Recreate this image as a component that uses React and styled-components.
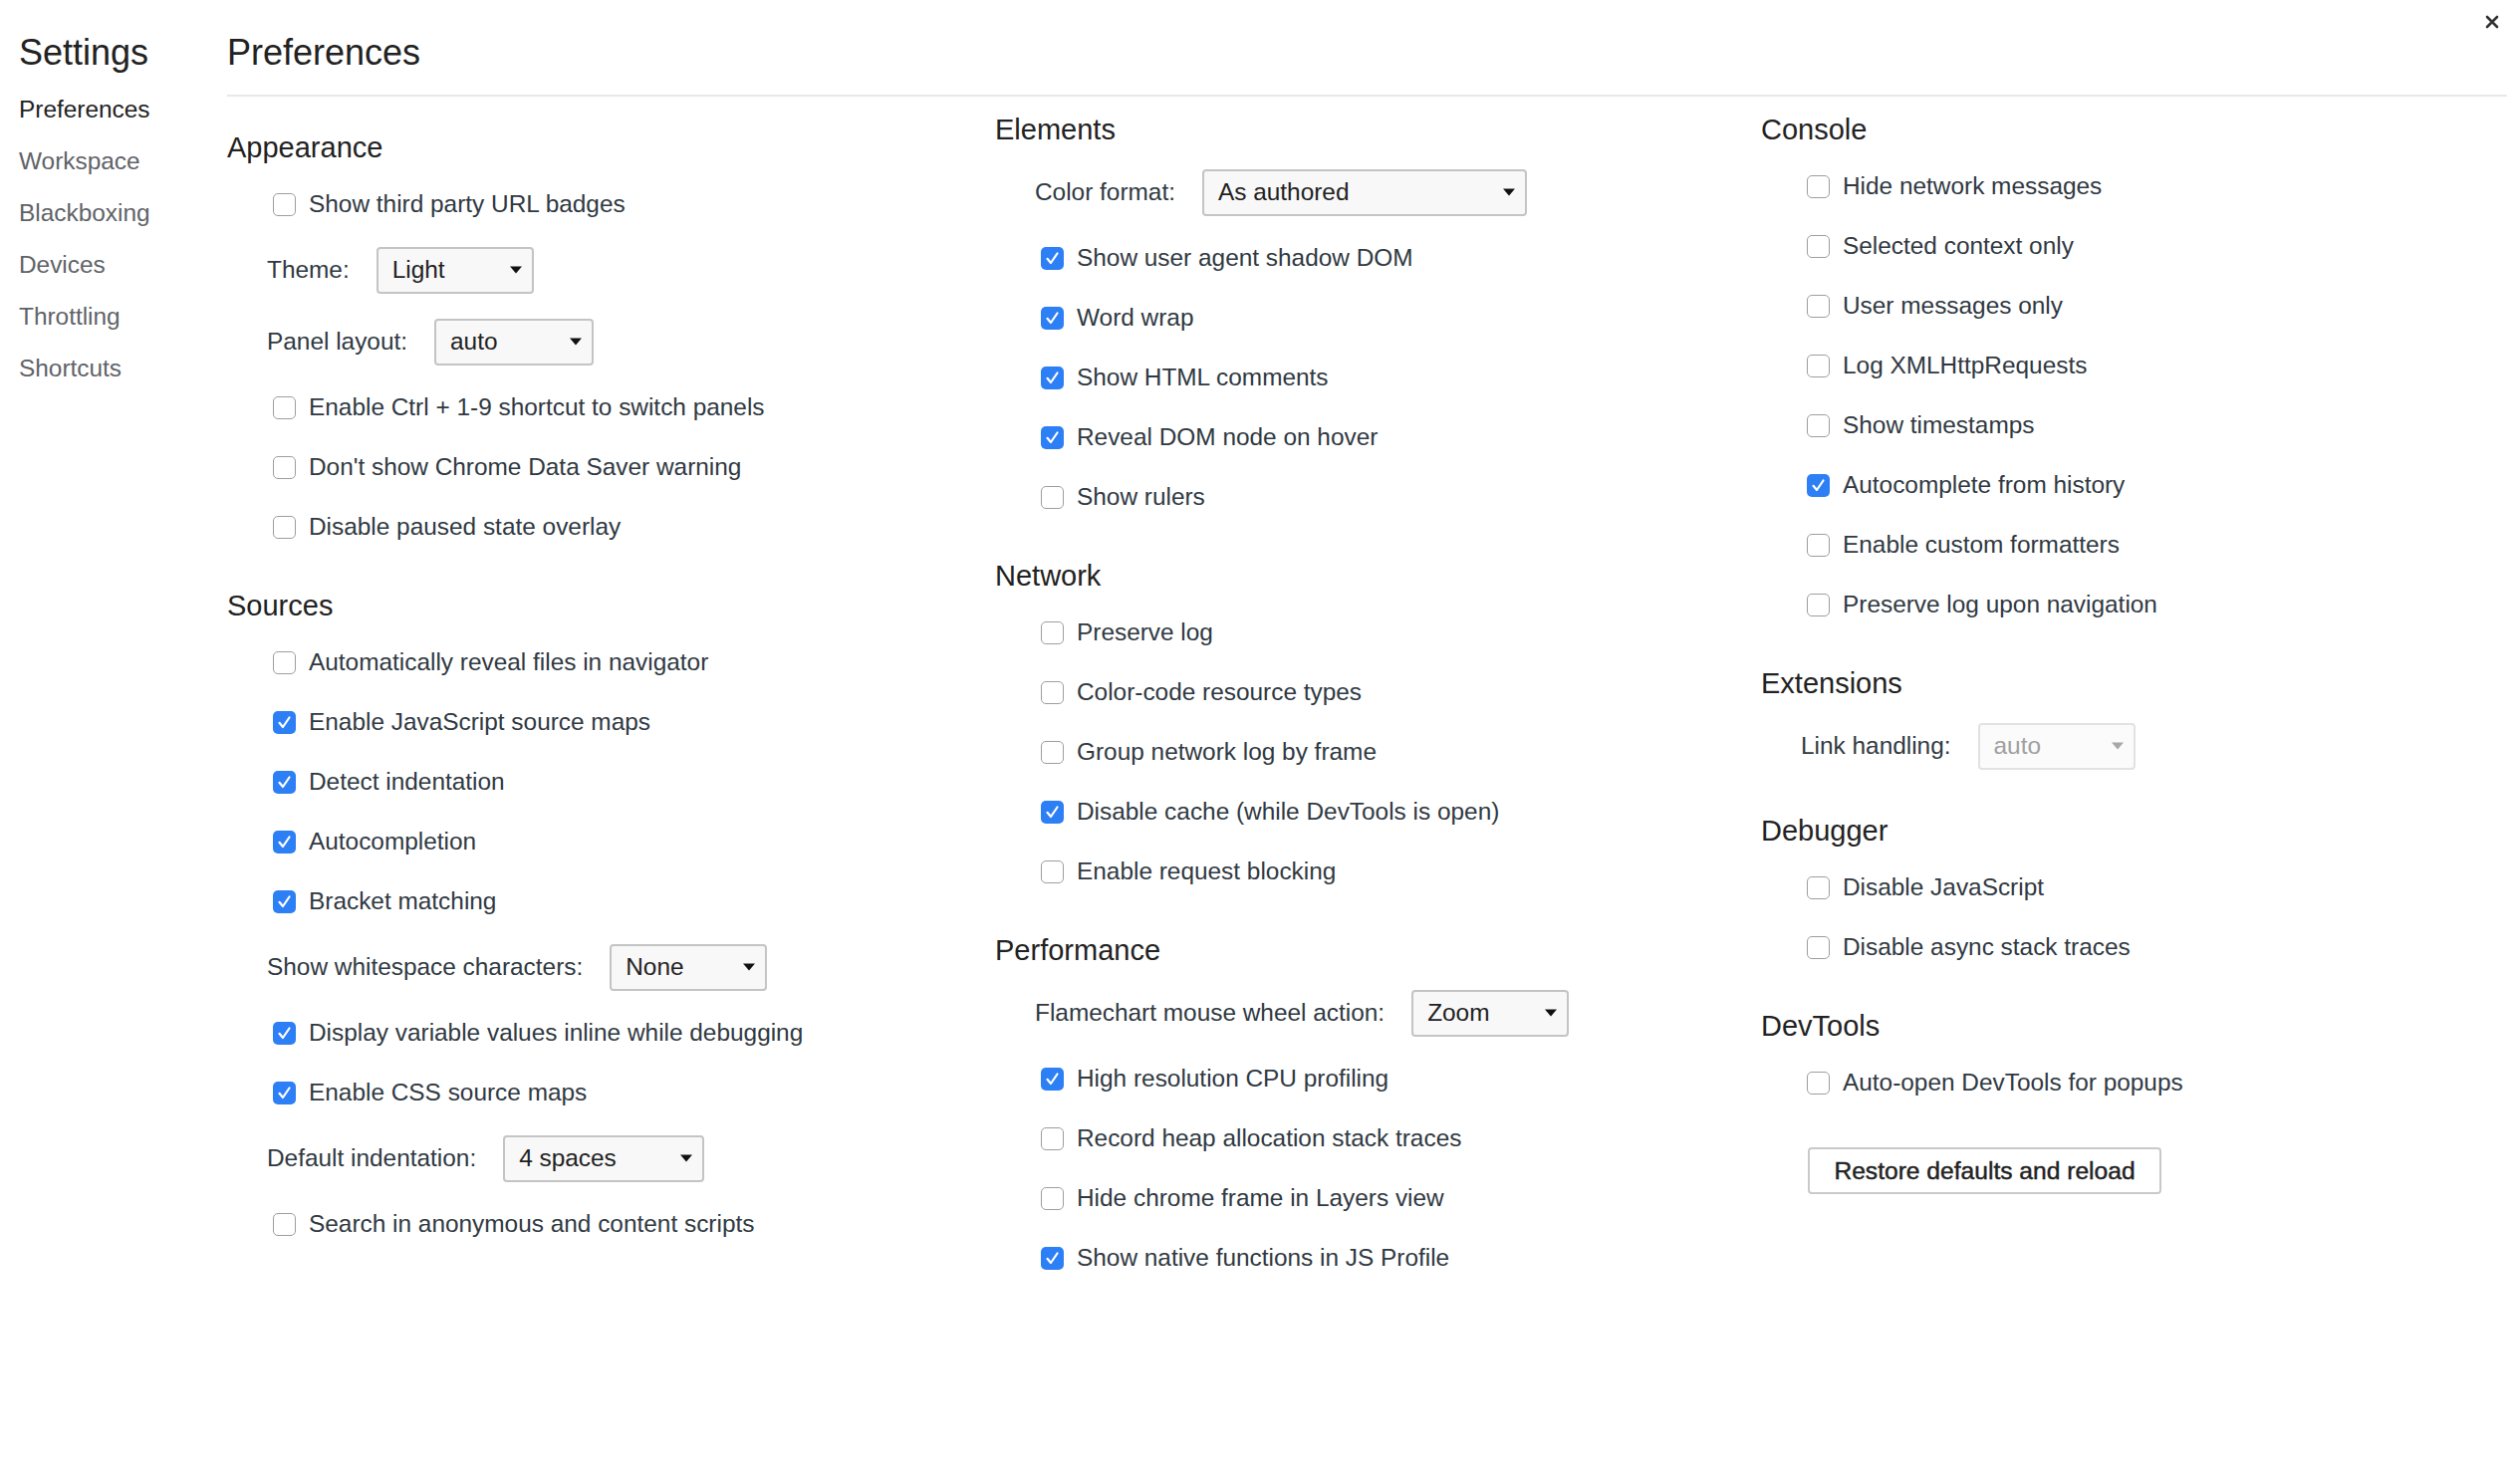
import React from "react";
import styled, { createGlobalStyle } from "styled-components";

const GlobalStyle = createGlobalStyle`
  html, body {
    margin: 0;
    padding: 0;
    background: #fff;
  }
  body {
    font-family: "Liberation Sans", Arial, sans-serif;
    color: #303942;
  }
`;

const Page = styled.div`
  position: relative;
  display: flex;
  width: 2530px;
  height: 1472px;
  background: #fff;
  overflow: hidden;
`;

const Sidebar = styled.nav`
  width: 228px;
  flex-shrink: 0;
  box-sizing: border-box;
  padding-left: 19px;
  display: flex;
  flex-direction: column;
`;

const SidebarTitle = styled.div`
  padding-top: 29px;
  line-height: 48px;
  font-size: 36px;
  color: #222;
  margin-bottom: 7px;
`;

const NavItem = styled.div`
  height: 52px;
  line-height: 52px;
  font-size: 24.4px;
  color: ${(p) => (p.$active ? "#222" : "#5f6368")};
`;

const Main = styled.main`
  flex: 1;
  padding-right: 13px;
  display: flex;
  flex-direction: column;
`;

const Header = styled.div`
  padding-top: 29px;
  padding-bottom: 18px;
  border-bottom: 2px solid #e8e8e8;
`;

const PageTitle = styled.h1`
  margin: 0;
  font-weight: normal;
  font-size: 36px;
  line-height: 48px;
  color: #222;
`;

const CloseButton = styled.button`
  position: absolute;
  top: 11px;
  right: 17px;
  width: 22px;
  height: 22px;
  padding: 0;
  border: none;
  background: none;
  display: flex;
  align-items: center;
  justify-content: center;
`;

const Columns = styled.div`
  display: grid;
  grid-template-columns: 771px 769px 1fr;
`;

const Column = styled.div`
  padding-top: ${(p) => p.$top}px;
  display: flex;
  flex-direction: column;
`;

const Section = styled.section`
  display: flex;
  flex-direction: column;
  margin-bottom: 28px;
`;

const SectionTitle = styled.h2`
  margin: 0 0 8px 0;
  height: 40px;
  line-height: 42px;
  font-size: 29px;
  font-weight: normal;
  color: #222;
`;

const CheckRow = styled.label`
  height: 60px;
  display: flex;
  align-items: center;
  gap: 13px;
  padding-left: 46px;
  font-size: 24.4px;
  color: #303942;
  white-space: nowrap;
`;

const Box = styled.span`
  width: 23px;
  height: 23px;
  box-sizing: border-box;
  border-radius: 5px;
  flex-shrink: 0;
  display: flex;
  align-items: center;
  justify-content: center;
  background: ${(p) => (p.$checked ? "#2d7ff5" : "#fff")};
  border: ${(p) => (p.$checked ? "none" : "1.5px solid #9e9e9e")};
`;

const SelectRow = styled.div`
  height: 72px;
  display: flex;
  align-items: center;
  gap: 27px;
  padding-left: 40px;
  font-size: 24.4px;
  color: #303942;
  white-space: nowrap;
`;

const Select = styled.div`
  width: ${(p) => p.$width}px;
  height: 47px;
  box-sizing: border-box;
  border: 2px solid ${(p) => (p.$disabled ? "#e2e2e2" : "#c4c4c4")};
  border-radius: 4px;
  background: ${(p) => (p.$disabled ? "#fbfbfb" : "#f8f8f8")};
  padding: 0 9px 0 14px;
  display: flex;
  align-items: center;
  justify-content: space-between;
  font-size: 24.4px;
  color: ${(p) => (p.$disabled ? "#a0a0a0" : "#222")};
`;

const ButtonRow = styled.div`
  padding-left: 47px;
  margin-top: 35px;
`;

const RestoreButton = styled.button`
  width: 355px;
  height: 47px;
  border: 2px solid #c9c9c9;
  border-radius: 4px;
  background: #fff;
  font-family: "Liberation Sans", Arial, sans-serif;
  font-size: 24.6px;
  font-weight: 400;
  -webkit-text-stroke: 0.45px #222;
  color: #222;
  padding: 0;
`;

const Check = ({ checked, children }) => (
  <CheckRow>
    <Box $checked={checked}>
      {checked && (
        <svg width="23" height="23" viewBox="0 0 23 23">
          <path d="M6.5 11.8 L10 16 L16.5 6.5" fill="none" stroke="#fff" strokeWidth="2.2" strokeLinecap="round" strokeLinejoin="round" />
        </svg>
      )}
    </Box>
    {children}
  </CheckRow>
);

const Dropdown = ({ label, value, width, disabled }) => (
  <SelectRow>
    <span>{label}</span>
    <Select $width={width} $disabled={disabled}>
      <span>{value}</span>
      <svg width="14" height="8" viewBox="0 0 14 8">
        <path d="M1 0.5 H13 L7 7.5 Z" fill={disabled ? "#a8a8a8" : "#111"} />
      </svg>
    </Select>
  </SelectRow>
);

const navItems = ["Preferences", "Workspace", "Blackboxing", "Devices", "Throttling", "Shortcuts"];

export default function App() {
  return (
    <Page>
      <GlobalStyle />
      <Sidebar>
        <SidebarTitle>Settings</SidebarTitle>
        {navItems.map((n, i) => (
          <NavItem key={n} $active={i === 0}>{n}</NavItem>
        ))}
      </Sidebar>
      <Main>
        <Header>
          <PageTitle>Preferences</PageTitle>
        </Header>
        <Columns>
          <Column $top={30}>
            <Section>
              <SectionTitle>Appearance</SectionTitle>
              <Check>Show third party URL badges</Check>
              <Dropdown label="Theme:" value="Light" width={158} />
              <Dropdown label="Panel layout:" value="auto" width={160} />
              <Check>Enable Ctrl + 1-9 shortcut to switch panels</Check>
              <Check>Don't show Chrome Data Saver warning</Check>
              <Check>Disable paused state overlay</Check>
            </Section>
            <Section>
              <SectionTitle>Sources</SectionTitle>
              <Check>Automatically reveal files in navigator</Check>
              <Check checked>Enable JavaScript source maps</Check>
              <Check checked>Detect indentation</Check>
              <Check checked>Autocompletion</Check>
              <Check checked>Bracket matching</Check>
              <Dropdown label="Show whitespace characters:" value="None" width={158} />
              <Check checked>Display variable values inline while debugging</Check>
              <Check checked>Enable CSS source maps</Check>
              <Dropdown label="Default indentation:" value="4 spaces" width={202} />
              <Check>Search in anonymous and content scripts</Check>
            </Section>
          </Column>

          <Column $top={12}>
            <Section>
              <SectionTitle>Elements</SectionTitle>
              <Dropdown label="Color format:" value="As authored" width={326} />
              <Check checked>Show user agent shadow DOM</Check>
              <Check checked>Word wrap</Check>
              <Check checked>Show HTML comments</Check>
              <Check checked>Reveal DOM node on hover</Check>
              <Check>Show rulers</Check>
            </Section>
            <Section>
              <SectionTitle>Network</SectionTitle>
              <Check>Preserve log</Check>
              <Check>Color-code resource types</Check>
              <Check>Group network log by frame</Check>
              <Check checked>Disable cache (while DevTools is open)</Check>
              <Check>Enable request blocking</Check>
            </Section>
            <Section>
              <SectionTitle>Performance</SectionTitle>
              <Dropdown label="Flamechart mouse wheel action:" value="Zoom" width={158} />
              <Check checked>High resolution CPU profiling</Check>
              <Check>Record heap allocation stack traces</Check>
              <Check>Hide chrome frame in Layers view</Check>
              <Check checked>Show native functions in JS Profile</Check>
            </Section>
          </Column>

          <Column $top={12}>
            <Section>
              <SectionTitle>Console</SectionTitle>
              <Check>Hide network messages</Check>
              <Check>Selected context only</Check>
              <Check>User messages only</Check>
              <Check>Log XMLHttpRequests</Check>
              <Check>Show timestamps</Check>
              <Check checked>Autocomplete from history</Check>
              <Check>Enable custom formatters</Check>
              <Check>Preserve log upon navigation</Check>
            </Section>
            <Section>
              <SectionTitle>Extensions</SectionTitle>
              <Dropdown label="Link handling:" value="auto" width={158} disabled />
            </Section>
            <Section>
              <SectionTitle>Debugger</SectionTitle>
              <Check>Disable JavaScript</Check>
              <Check>Disable async stack traces</Check>
            </Section>
            <Section>
              <SectionTitle>DevTools</SectionTitle>
              <Check>Auto-open DevTools for popups</Check>
              <ButtonRow>
                <RestoreButton>Restore defaults and reload</RestoreButton>
              </ButtonRow>
            </Section>
          </Column>
        </Columns>
      </Main>
      <CloseButton aria-label="Close">
        <svg width="14" height="14" viewBox="0 0 14 14">
          <path d="M2 2 L12 12 M12 2 L2 12" stroke="#333" strokeWidth="2.6" strokeLinecap="round" />
        </svg>
      </CloseButton>
    </Page>
  );
}
